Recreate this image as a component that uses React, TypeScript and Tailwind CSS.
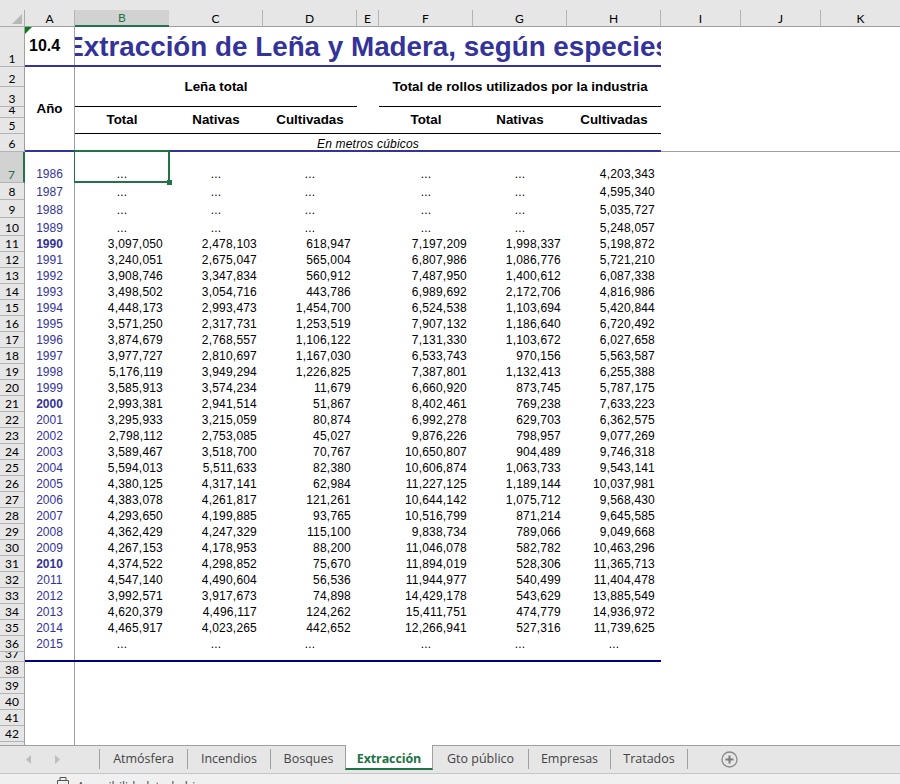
import React from 'react';

const sheetCols = 'grid grid-cols-[50px_94px_94px_94px_22px_94px_94px_94px] w-[636px]';

const columns = [
  { label: 'A', width: 'w-[50px]' },
  { label: 'B', width: 'w-[94px]', selected: true },
  { label: 'C', width: 'w-[94px]' },
  { label: 'D', width: 'w-[94px]' },
  { label: 'E', width: 'w-[22px]' },
  { label: 'F', width: 'w-[94px]' },
  { label: 'G', width: 'w-[94px]' },
  { label: 'H', width: 'w-[94px]' },
  { label: 'I', width: 'w-[80px]' },
  { label: 'J', width: 'w-[80px]' },
  { label: 'K', width: 'w-[80px]' },
];

// altura de cada fila, igual que en la hoja
const rowHeights: [number, string][] = [
  [1, 'h-[40px]'], [2, 'h-[20px]'], [3, 'h-[20px]'], [4, 'h-[11px]'], [5, 'h-[16px]'], [6, 'h-[18px]'],
  [7, 'h-[31px]'], [8, 'h-[17px]'], [9, 'h-[18px]'], [10, 'h-[18px]'],
  ...Array.from({ length: 26 }, (_, i): [number, string] => [i + 11, 'h-[16px]']),
  [37, 'h-[10px]'],
  [38, 'h-[16px]'], [39, 'h-[16px]'], [40, 'h-[16px]'], [41, 'h-[16px]'], [42, 'h-[16px]'], [43, 'h-[16px]'],
];

const D = '...';

const data: { year: string; bold?: boolean; h: string; vals: string[] }[] = [
  { year: '1986', h: 'h-[31px] items-end pb-px', vals: [D, D, D, D, D, '4,203,343'] },
  { year: '1987', h: 'h-[17px] items-center', vals: [D, D, D, D, D, '4,595,340'] },
  { year: '1988', h: 'h-[18px] items-end', vals: [D, D, D, D, D, '5,035,727'] },
  { year: '1989', h: 'h-[18px] items-end', vals: [D, D, D, D, D, '5,248,057'] },
  { year: '1990', bold: true, h: 'h-[16px] items-center', vals: ['3,097,050', '2,478,103', '618,947', '7,197,209', '1,998,337', '5,198,872'] },
  { year: '1991', h: 'h-[16px] items-center', vals: ['3,240,051', '2,675,047', '565,004', '6,807,986', '1,086,776', '5,721,210'] },
  { year: '1992', h: 'h-[16px] items-center', vals: ['3,908,746', '3,347,834', '560,912', '7,487,950', '1,400,612', '6,087,338'] },
  { year: '1993', h: 'h-[16px] items-center', vals: ['3,498,502', '3,054,716', '443,786', '6,989,692', '2,172,706', '4,816,986'] },
  { year: '1994', h: 'h-[16px] items-center', vals: ['4,448,173', '2,993,473', '1,454,700', '6,524,538', '1,103,694', '5,420,844'] },
  { year: '1995', h: 'h-[16px] items-center', vals: ['3,571,250', '2,317,731', '1,253,519', '7,907,132', '1,186,640', '6,720,492'] },
  { year: '1996', h: 'h-[16px] items-center', vals: ['3,874,679', '2,768,557', '1,106,122', '7,131,330', '1,103,672', '6,027,658'] },
  { year: '1997', h: 'h-[16px] items-center', vals: ['3,977,727', '2,810,697', '1,167,030', '6,533,743', '970,156', '5,563,587'] },
  { year: '1998', h: 'h-[16px] items-center', vals: ['5,176,119', '3,949,294', '1,226,825', '7,387,801', '1,132,413', '6,255,388'] },
  { year: '1999', h: 'h-[16px] items-center', vals: ['3,585,913', '3,574,234', '11,679', '6,660,920', '873,745', '5,787,175'] },
  { year: '2000', bold: true, h: 'h-[16px] items-center', vals: ['2,993,381', '2,941,514', '51,867', '8,402,461', '769,238', '7,633,223'] },
  { year: '2001', h: 'h-[16px] items-center', vals: ['3,295,933', '3,215,059', '80,874', '6,992,278', '629,703', '6,362,575'] },
  { year: '2002', h: 'h-[16px] items-center', vals: ['2,798,112', '2,753,085', '45,027', '9,876,226', '798,957', '9,077,269'] },
  { year: '2003', h: 'h-[16px] items-center', vals: ['3,589,467', '3,518,700', '70,767', '10,650,807', '904,489', '9,746,318'] },
  { year: '2004', h: 'h-[16px] items-center', vals: ['5,594,013', '5,511,633', '82,380', '10,606,874', '1,063,733', '9,543,141'] },
  { year: '2005', h: 'h-[16px] items-center', vals: ['4,380,125', '4,317,141', '62,984', '11,227,125', '1,189,144', '10,037,981'] },
  { year: '2006', h: 'h-[16px] items-center', vals: ['4,383,078', '4,261,817', '121,261', '10,644,142', '1,075,712', '9,568,430'] },
  { year: '2007', h: 'h-[16px] items-center', vals: ['4,293,650', '4,199,885', '93,765', '10,516,799', '871,214', '9,645,585'] },
  { year: '2008', h: 'h-[16px] items-center', vals: ['4,362,429', '4,247,329', '115,100', '9,838,734', '789,066', '9,049,668'] },
  { year: '2009', h: 'h-[16px] items-center', vals: ['4,267,153', '4,178,953', '88,200', '11,046,078', '582,782', '10,463,296'] },
  { year: '2010', bold: true, h: 'h-[16px] items-center', vals: ['4,374,522', '4,298,852', '75,670', '11,894,019', '528,306', '11,365,713'] },
  { year: '2011', h: 'h-[16px] items-center', vals: ['4,547,140', '4,490,604', '56,536', '11,944,977', '540,499', '11,404,478'] },
  { year: '2012', h: 'h-[16px] items-center', vals: ['3,992,571', '3,917,673', '74,898', '14,429,178', '543,629', '13,885,549'] },
  { year: '2013', h: 'h-[16px] items-center', vals: ['4,620,379', '4,496,117', '124,262', '15,411,751', '474,779', '14,936,972'] },
  { year: '2014', h: 'h-[16px] items-center', vals: ['4,465,917', '4,023,265', '442,652', '12,266,941', '527,316', '11,739,625'] },
  { year: '2015', h: 'h-[16px] items-center', vals: [D, D, D, D, D, D] },
];

const tabs = [
  { label: 'Atmósfera', width: 'w-[88px]' },
  { label: 'Incendios', width: 'w-[83px]' },
  { label: 'Bosques', width: 'w-[75px]' },
  { label: 'Extracción', width: 'w-[88px]', active: true },
  { label: 'Gto público', width: 'w-[96px]' },
  { label: 'Empresas', width: 'w-[82px]' },
  { label: 'Tratados', width: 'w-[77px]' },
];

const Cell: React.FC<{ value: string; selected?: boolean; row: string }> = ({ value, selected, row }) => {
  const isDots = value === D;
  return (
    <div className={`relative flex ${row} ${isDots ? 'justify-center' : 'justify-end pr-[6px]'}`}>
      <span className="leading-4 tracking-[0.2px]">{value}</span>
      {selected && (
        <div className="absolute left-[-1px] top-[-2px] h-[33px] w-[96px] border-t-2 border-r-2 border-b-2 border-l border-[#217346]">
          <div className="absolute bottom-[-4px] right-[-4px] h-[5px] w-[5px] bg-[#217346]" />
        </div>
      )}
    </div>
  );
};

export default function App() {
  return (
    <div className="flex h-[784px] w-[900px] flex-col overflow-hidden bg-white font-['Liberation_Sans',Arial,sans-serif] text-[12px] text-black">
      <div className="h-[10px] shrink-0 bg-[#e6e6e6]" />

      {/* letras de columna */}
      <div className="flex h-[17px] shrink-0 bg-[#e6e6e6] font-['Lato',sans-serif] text-[12px]">
        <div className="relative w-[25px] shrink-0 border-r border-b border-[#ababab]">
          <svg className="absolute left-[12px] top-[4px]" width="10" height="10" viewBox="0 0 10 10">
            <polygon points="10,0 10,10 0,10" fill="#b8b8b8" />
          </svg>
        </div>
        {columns.map((c) => (
          <div
            key={c.label}
            className={`flex shrink-0 items-center justify-center pt-px ${c.width} ${
              c.selected
                ? 'border-b-2 border-[#217346] bg-[#d2d2d2] text-[#217346]'
                : 'border-r border-b border-r-[#b4b4b4] border-b-[#9f9f9f]'
            }`}
          >
            {c.label}
          </div>
        ))}
      </div>

      <div className="flex h-[718px] shrink-0 overflow-hidden">
        {/* numeros de fila */}
        <div className="flex w-[25px] shrink-0 flex-col font-['Lato',sans-serif] text-[12px]">
          {rowHeights.map(([n, h]) => (
            <div
              key={n}
              className={`flex shrink-0 items-end justify-center overflow-hidden border-b ${h} ${
                n === 7
                  ? 'border-r-2 border-b-[#b4b4b4] border-r-[#217346] bg-[#d2d2d2] text-[#217346]'
                  : 'border-r border-b-[#b4b4b4] border-r-[#9f9f9f] bg-[#e6e6e6]'
              }`}
            >
              <span className="leading-[14px]">{n}</span>
            </div>
          ))}
        </div>

        <div className="relative flex min-w-0 flex-1 flex-col">
          {/* triangulo verde de la celda A1 */}
          <svg className="absolute left-0 top-0" width="7" height="7" viewBox="0 0 7 7">
            <polygon points="0,0 7,0 0,7" fill="#0b7a1e" />
          </svg>

          {/* encabezado fijo */}
          <div className="flex h-[125px] shrink-0 border-b border-[#9f9f9f]">
            <div className="flex h-[125px] w-[636px] shrink-0 flex-col">
              <div className="flex h-[40px] shrink-0 border-b-2 border-[#333399]">
                <div className="flex w-[50px] shrink-0 items-center border-r border-[#9f9f9f] pl-1 text-[16px] font-bold">
                  10.4
                </div>
                <div className="flex w-[586px] justify-center overflow-hidden pt-[2px] text-[27.8px] leading-9 font-bold whitespace-nowrap text-[#333399]">
                  <span className="shrink-0">Extracción de Leña y Madera, según especies</span>
                </div>
              </div>
              <div className="flex h-[85px] shrink-0 border-b-2 border-[#333399]">
                <div className="flex w-[50px] shrink-0 items-center justify-center border-r border-[#9f9f9f] text-[13.33px] font-bold">
                  Año
                </div>
                <div className="flex w-[586px] flex-col text-[13.33px] font-bold">
                  <div className="flex h-[40px] shrink-0">
                    <div className="flex w-[282px] items-center justify-center border-b border-black">Leña total</div>
                    <div className="w-[22px]" />
                    <div className="flex w-[282px] items-center justify-center border-b border-black">
                      Total de rollos utilizados por la industria
                    </div>
                  </div>
                  <div className="grid h-[27px] shrink-0 grid-cols-[94px_94px_94px_22px_94px_94px_94px] items-center border-b border-black">
                    <div className="text-center">Total</div>
                    <div className="text-center">Nativas</div>
                    <div className="text-center">Cultivadas</div>
                    <div />
                    <div className="text-center">Total</div>
                    <div className="text-center">Nativas</div>
                    <div className="text-center">Cultivadas</div>
                  </div>
                  <div className="flex flex-1 items-center justify-center pt-px text-[12px] font-normal tracking-[0.2px] italic">
                    En metros cúbicos
                  </div>
                </div>
              </div>
            </div>
          </div>

          {/* datos */}
          {data.map((d, i) => (
            <div key={d.year} className={`${sheetCols} shrink-0`}>
              <div
                className={`flex justify-center border-r border-[#9f9f9f] leading-4 text-[#333399] ${d.h} ${
                  d.bold ? 'font-bold' : ''
                }`}
              >
                <span className="leading-4">{d.year}</span>
              </div>
              {d.vals.slice(0, 3).map((v, j) => (
                <Cell key={j} value={v} row={d.h} selected={i === 0 && j === 0} />
              ))}
              <div />
              {d.vals.slice(3).map((v, j) => (
                <Cell key={j} value={v} row={d.h} />
              ))}
            </div>
          ))}

          <div className="flex h-[10px] w-[636px] shrink-0 border-b-2 border-[#000080]">
            <div className="w-[50px] border-r border-[#9f9f9f]" />
          </div>
          <div className="flex-1">
            <div className="h-full w-[50px] border-r border-[#9f9f9f]" />
          </div>
        </div>
      </div>

      {/* pestañas de hojas */}
      <div className="flex h-[29px] shrink-0 items-start border-t border-b border-t-[#a0a0a0] border-b-[#c6c6c6] bg-[#e6e6e6] font-['Open_Sans',sans-serif] text-[12.5px] text-[#444444]">
        <div className="flex h-[27px] w-[99px] shrink-0 items-center">
          <svg className="ml-[26px]" width="5" height="9" viewBox="0 0 5 9">
            <polygon points="5,0 5,9 0,4.5" fill="#bdbdbd" />
          </svg>
          <svg className="ml-[24px]" width="5" height="9" viewBox="0 0 5 9">
            <polygon points="0,0 0,9 5,4.5" fill="#bdbdbd" />
          </svg>
        </div>
        <div className="mt-[3px] h-[20px] w-px shrink-0 bg-[#a0a0a0]" />
        {tabs.map((t) =>
          t.active ? (
            <div
              key={t.label}
              className={`-mt-px -ml-[1px] flex h-[25px] shrink-0 items-center justify-center border-x border-b-2 border-x-[#a0a0a0] border-b-[#217346] bg-white pt-[5px] font-bold tracking-[-0.1px] text-[#217346] ${t.width}`}
            >
              {t.label}
            </div>
          ) : (
            <div key={t.label} className={`flex h-[26px] shrink-0 items-center ${t.width}`}>
              <span className="flex-1 text-center">{t.label}</span>
              {t.label !== 'Bosques' && <span className="h-[20px] w-px bg-[#a0a0a0]" />}
            </div>
          ),
        )}
        <svg className="mt-[5px] ml-[33px] shrink-0" width="17" height="17" viewBox="0 0 17 17">
          <circle cx="8.5" cy="8.5" r="7.5" fill="none" stroke="#8a8a8a" strokeWidth="1.3" />
          <path d="M8.5 4.5v8M4.5 8.5h8" stroke="#7a7a7a" strokeWidth="2" />
        </svg>
      </div>

      {/* barra de estado, casi fuera de la ventana */}
      <div className="flex h-[10px] shrink-0 overflow-hidden bg-[#f0f0f0] pt-[3px] pl-[57px] font-['Open_Sans',sans-serif] text-[12px] leading-4 text-[#444444]">
        <svg className="shrink-0" width="12" height="12" viewBox="0 0 12 12">
          <path d="M0.5 3.5h11v8h-11zM3 3.5V0.5h6v3" fill="none" stroke="#555555" strokeWidth="1" />
        </svg>
        <span className="mt-[2px] ml-[8px] whitespace-nowrap">Accesibilidad: todo bien</span>
      </div>
    </div>
  );
}
